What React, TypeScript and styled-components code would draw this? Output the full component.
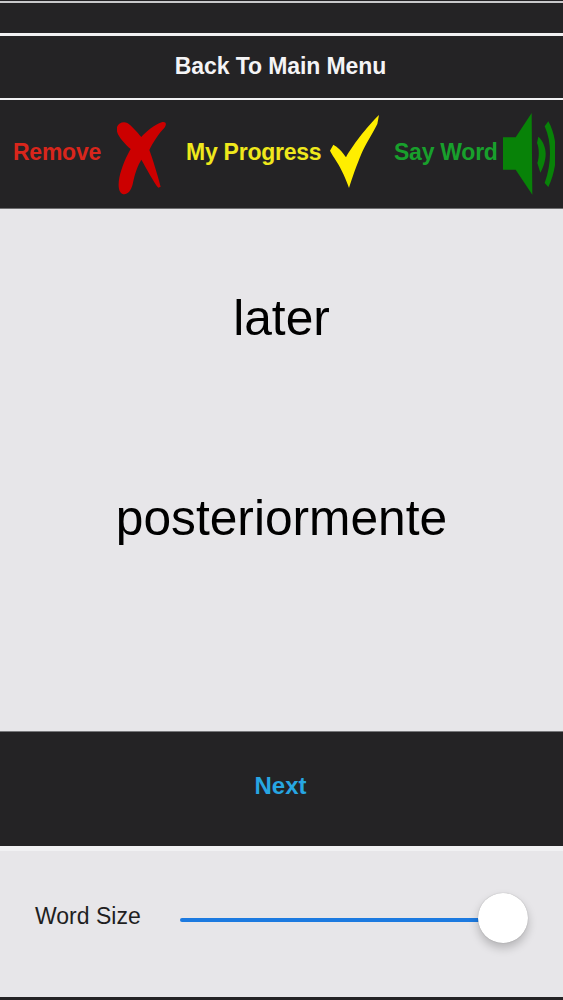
import React from "react";
import styled, { createGlobalStyle } from "styled-components";

const GlobalStyle = createGlobalStyle`
  html, body {
    margin: 0;
    padding: 0;
    background: #e7e6e9;
  }
  body {
    font-family: "Liberation Sans", Arial, sans-serif;
  }
`;

const Screen = styled.div`
  width: 563px;
  height: 1000px;
  display: flex;
  flex-direction: column;
  overflow: hidden;
`;

const Bar = styled.div<{ $height: number; $bottom?: number; $right?: number }>`
  height: ${(p) => p.$height}px;
  flex: none;
  box-sizing: border-box;
  padding-bottom: ${(p) => p.$bottom || 0}px;
  padding-right: ${(p) => p.$right || 0}px;
  background: #242325;
  display: flex;
  align-items: center;
  justify-content: center;
`;

const Rule = styled.div<{ $height: number; $color?: string }>`
  height: ${(p) => p.$height}px;
  flex: none;
  background: ${(p) => p.$color || "#f1f1f3"};
`;

const BarLabel = styled.span<{ $color: string; $size: number; $spacing?: number }>`
  color: ${(p) => p.$color};
  font-size: ${(p) => p.$size}px;
  letter-spacing: ${(p) => p.$spacing || 0}px;
  font-weight: 700;
`;

const ActionRow = styled.div`
  height: 108px;
  flex: none;
  box-sizing: border-box;
  padding: 0 0 4px 13px;
  background: #242325;
  display: grid;
  grid-template-columns: 173px 208px 1fr;
  align-items: center;
`;

const Action = styled.div<{ $gap: number }>`
  display: flex;
  align-items: center;
  gap: ${(p) => p.$gap}px;
`;

const ActionLabel = styled.span<{ $color: string }>`
  color: ${(p) => p.$color};
  font-size: 23px;
  letter-spacing: -0.25px;
  font-weight: 700;
  white-space: nowrap;
`;

const Icon = styled.svg<{ $top?: number; $bottom?: number }>`
  flex: none;
  display: block;
  margin-top: ${(p) => p.$top || 0}px;
  margin-bottom: ${(p) => p.$bottom || 0}px;
`;

const Card = styled.main`
  height: 522px;
  flex: none;
  box-sizing: border-box;
  padding-top: 81px;
  background: #e7e6e9;
  display: flex;
  flex-direction: column;
  align-items: center;
  gap: 144px;
  color: #000;
  font-size: 49.7px;
  line-height: 56px;
`;

const SizePanel = styled.div`
  flex: 1;
  box-sizing: border-box;
  padding: 0 60px 16px 35px;
  background: #e7e6e9;
  display: flex;
  align-items: center;
  gap: 39px;
`;

const SizeLabel = styled.span`
  color: #1f1f1f;
  font-size: 23px;
  white-space: nowrap;
`;

const Track = styled.div`
  flex: 1;
  height: 4px;
  margin-top: 8px;
  border-radius: 2px;
  background: #1c7ae0;
  position: relative;
`;

const Thumb = styled.div`
  position: absolute;
  right: -25px;
  top: -25px;
  width: 50px;
  height: 50px;
  border-radius: 50%;
  background: #fff;
  box-shadow: 0 5px 10px rgba(0, 0, 0, 0.22), 0 0 1px rgba(0, 0, 0, 0.3);
`;

const RemoveIcon = () => (
  <Icon width="50" height="73" viewBox="21 21 150 219" $top={12}>
    <path
      fill="#cc0000"
      d="M20 42 C20 26 38 18 52 24 C62 30 82 52 94 66 C106 52 135 28 155 22 C168 19 172 27 162 40 C148 54 128 84 118 105 C126 125 146 190 152 215 L145 218 C133 205 108 158 94 134 C84 150 74 176 68 208 C62 232 48 242 36 236 C25 230 24 208 28 188 C34 158 50 122 62 102 C46 88 20 62 20 42 Z"
    />
  </Icon>
);

const CheckIcon = () => (
  <Icon width="49" height="73" viewBox="18 15 147 219" $bottom={2}>
    <path
      fill="#ffee00"
      d="M165 15 L160 42 C148 66 122 108 112 132 C100 160 84 205 75 234 C68 212 50 172 38 155 C30 142 22 130 18 122 L28 104 C40 110 56 126 66 142 C82 112 128 50 165 15 Z"
    />
  </Icon>
);

const SpeakerIcon = () => (
  <Icon width="52" height="82" viewBox="24 15 156 246" $top={4}>
    <path fill="#088208" d="M24 88 H62 L110 15 L112 260 L62 185 H24 Z" />
    <path fill="#088208" d="M130 86 C144 98 152 118 152 137 C152 157 145 178 136 194 L127 165 C133 150 133 120 126 105 Z" />
    <path fill="#088208" d="M160 40 C174 65 183 100 183 135 C183 170 174 208 160 237 L149 225 C160 195 165 165 165 135 C165 105 160 80 149 55 Z" />
  </Icon>
);

export default function App() {
  return (
    <Screen>
      <GlobalStyle />
      <Bar $height={1} />
      <Rule $height={2} $color="#c9c9cb" />
      <Bar $height={30} />
      <Rule $height={3} />
      <Bar $height={62} $bottom={1} $right={2}>
        <BarLabel $color="#f4f4f6" $size={23} $spacing={-0.1}>Back To Main Menu</BarLabel>
      </Bar>
      <Rule $height={2} />
      <ActionRow>
        <Action $gap={16}>
          <ActionLabel $color="#d9261c">Remove</ActionLabel>
          <RemoveIcon />
        </Action>
        <Action $gap={9}>
          <ActionLabel $color="#efe81c">My Progress</ActionLabel>
          <CheckIcon />
        </Action>
        <Action $gap={5}>
          <ActionLabel $color="#18a02c">Say Word</ActionLabel>
          <SpeakerIcon />
        </Action>
      </ActionRow>
      <Rule $height={1} $color="#6e6e70" />
      <Card>
        <span>later</span>
        <span>posteriormente</span>
      </Card>
      <Rule $height={1} $color="#77777a" />
      <Bar $height={114} $bottom={6} $right={2}>
        <BarLabel $color="#27a6e2" $size={24}>Next</BarLabel>
      </Bar>
      <Rule $height={5} />
      <SizePanel>
        <SizeLabel>Word Size</SizeLabel>
        <Track>
          <Thumb />
        </Track>
      </SizePanel>
      <Rule $height={3} $color="#242325" />
    </Screen>
  );
}
